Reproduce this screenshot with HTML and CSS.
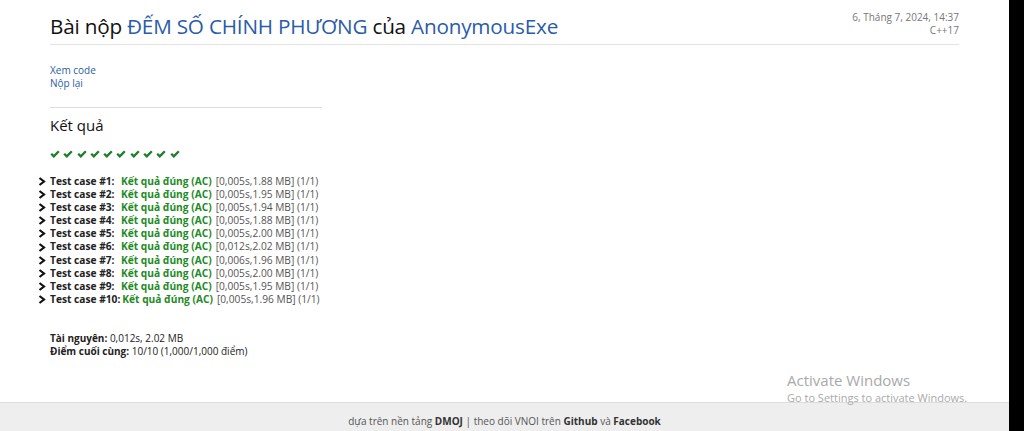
FILE: index.html
```html
<!DOCTYPE html>
<html lang="vi">
<head>
    <meta charset="UTF-8">
    <title>Bài nộp ĐẾM SỐ CHÍNH PHƯƠNG của AnonymousExe</title>
    <link rel="stylesheet" href="styles.css">
</head>
<body>
    <div class="page">
        <div class="content">
            <div class="title-row">
                <h2 class="title">Bài nộp <a href="#">ĐẾM SỐ CHÍNH PHƯƠNG</a> của <a href="#">AnonymousExe</a></h2>
                <div class="meta">
                    <div>6, Tháng 7, 2024, 14:37</div>
                    <div>C++17</div>
                </div>
            </div>

            <div class="links">
                <a href="#">Xem code</a>
                <a href="#">Nộp lại</a>
            </div>

            <div class="results">
                <h3>Kết quả</h3>
                <div class="checks" id="checks"></div>

                <div class="cases" id="cases"></div>

                <div class="summary">
                    <div><b>Tài nguyên:</b> 0,012s, 2.02 MB</div>
                    <div><b>Điểm cuối cùng:</b> 10/10 (1,000/1,000 điểm)</div>
                </div>
            </div>
        </div>

        <div class="watermark">
            <div class="wm-big">Activate Windows</div>
            <div class="wm-small">Go to Settings to activate Windows.</div>
        </div>

        <footer class="footer">
            dựa trên nền tảng <b>DMOJ</b> | theo dõi VNOI trên <b>Github</b> và <b>Facebook</b>
        </footer>
    </div>
    <div class="side"></div>

    <script>
        const cases = [
            ["0,005s", "1.88 MB"],
            ["0,005s", "1.95 MB"],
            ["0,005s", "1.94 MB"],
            ["0,005s", "1.88 MB"],
            ["0,005s", "2.00 MB"],
            ["0,012s", "2.02 MB"],
            ["0,006s", "1.96 MB"],
            ["0,005s", "2.00 MB"],
            ["0,005s", "1.95 MB"],
            ["0,005s", "1.96 MB"]
        ];
        const list = document.getElementById("cases");
        const checks = document.getElementById("checks");
        cases.forEach((c, i) => {
            const tick = document.createElement("span");
            tick.className = "tick";
            tick.innerHTML = `<svg width="10" height="8" viewBox="0 0 10 8"><path d="M1.2 3.8 L3.8 6.4 L8.8 1.2" fill="none" stroke="#1e7d2a" stroke-width="2.3"/></svg>`;
            checks.appendChild(tick);

            const row = document.createElement("div");
            row.className = "case";
            row.innerHTML = `
                <span class="chev"><svg width="8" height="9" viewBox="0 0 8 9"><path d="M1.5 1 L6 4.5 L1.5 8" fill="none" stroke="#111" stroke-width="2.2"/></svg></span>
                <b class="case-name">Test case #${i + 1}:</b>
                <b class="ac">Kết quả đúng (AC)</b>
                <span class="info">[${c[0]},${c[1]}] (1/1)</span>
            `;
            list.appendChild(row);
        });
    </script>
</body>
</html>
```

FILE: styles.css
```css
html, body {
    margin: 0;
    padding: 0;
    height: 100%;
}

body {
    display: flex;
    font-family: "Open Sans", "Noto Sans", sans-serif;
    color: #222;
    background-color: #fff;
    overflow: hidden;
}

a {
    color: #2a5ca8;
    text-decoration: none;
}

.page {
    flex: 1;
    display: flex;
    flex-direction: column;
    position: relative;
    height: 431px;
}

.side {
    width: 15px;
    background-color: #000;
}

.content {
    flex: 1;
    padding: 0 50px;
}

.title-row {
    display: flex;
    justify-content: space-between;
    align-items: flex-start;
    border-bottom: 1px solid #e3e3e3;
    height: 44px;
}

.title {
    margin: 12px 0 0;
    font-size: 20.7px;
    font-weight: normal;
    color: #111;
    letter-spacing: -0.2px;
}

.meta {
    margin-top: 11px;
    text-align: right;
    font-size: 10px;
    line-height: 13px;
    color: #777;
}

.links {
    display: flex;
    flex-direction: column;
    margin-top: 19px;
    font-size: 10px;
    line-height: 13px;
}

.results {
    width: 272px;
    margin-top: 17px;
    border-top: 1px solid #ddd;
}

.results h3 {
    margin: 7px 0 0;
    font-size: 15px;
    font-weight: normal;
    color: #111;
}

.checks {
    display: flex;
    margin-top: 14px;
    height: 10px;
    align-items: center;
}

.tick {
    display: flex;
    width: 13.3px;
}

.cases {
    margin-top: 16px;
    font-size: 10.2px;
    line-height: 13.1px;
    white-space: nowrap;
}

.case {
    display: flex;
    align-items: center;
}

.chev {
    display: flex;
    width: 12px;
    margin-left: -12px;
}

.case-name {
    flex: 0 0 auto;
    min-width: 69px;
    margin-right: 2px;
    color: #222;
}

.ac {
    color: #1e8a25;
    margin-right: 4px;
}

.info {
    color: #555;
}

.summary {
    margin-top: 26px;
    font-size: 10px;
    line-height: 13px;
    white-space: nowrap;
}

.watermark {
    position: absolute;
    left: 787px;
    top: 370px;
    color: #a9a9a9;
}

.wm-big {
    font-size: 15px;
    line-height: 20px;
}

.wm-small {
    font-size: 11px;
    line-height: 16px;
}

.footer {
    height: 29px;
    border-top: 1px solid #ddd;
    background-color: #eee;
    text-align: center;
    font-size: 10px;
    line-height: 13px;
    color: #555;
    box-sizing: border-box;
    padding-top: 12px;
}

.footer b {
    color: #333;
}
```
